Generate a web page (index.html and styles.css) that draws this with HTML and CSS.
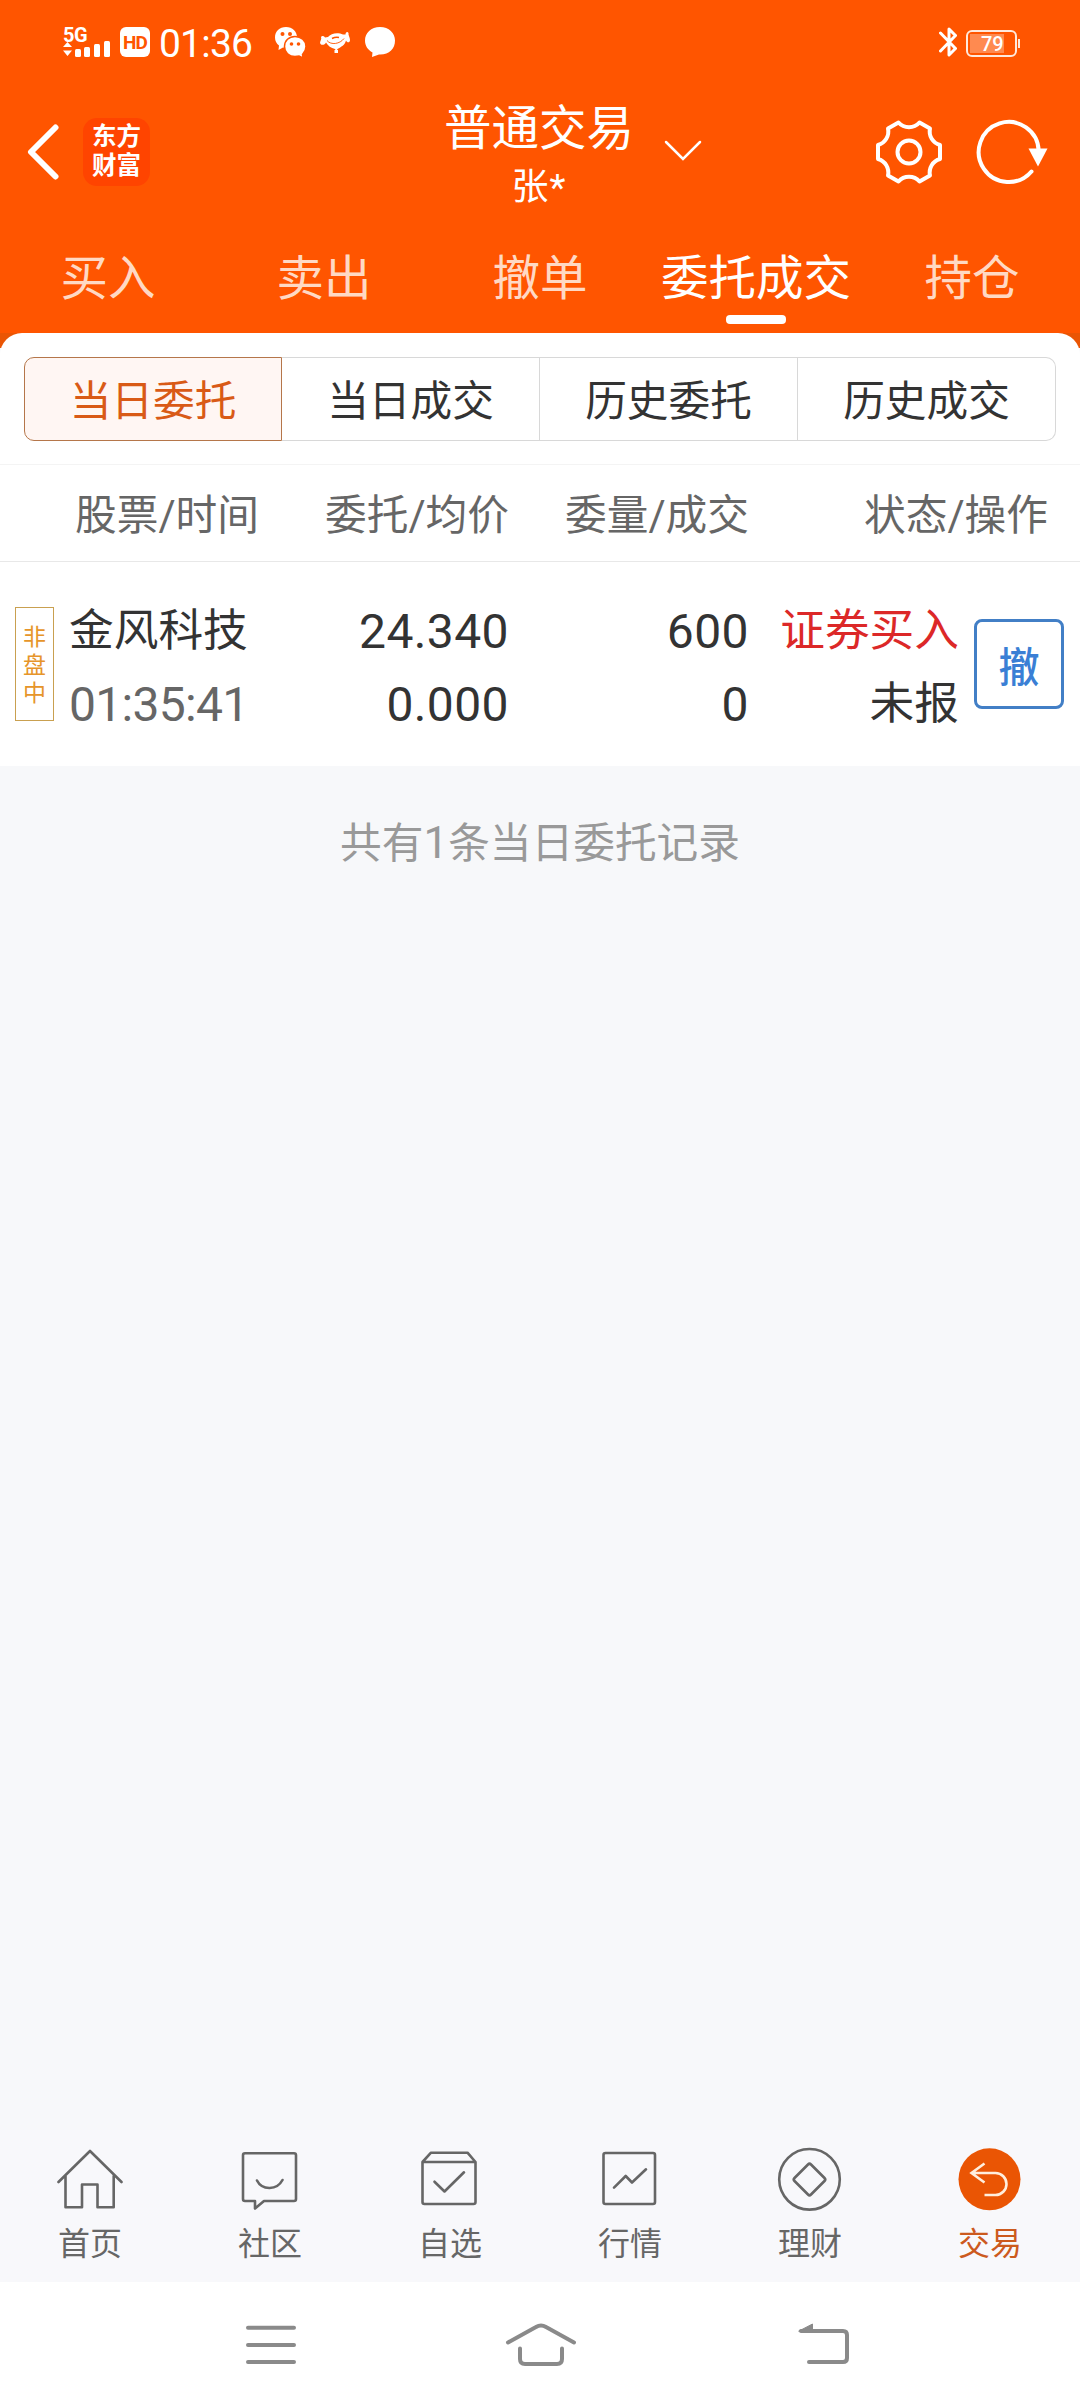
FILE: index.html
```html
<!DOCTYPE html>
<html lang="zh-CN">
<head>
    <meta charset="UTF-8">
    <meta name="viewport" content="width=device-width, initial-scale=1.0">
    <title>普通交易</title>
    <link rel="stylesheet" href="styles.css">
</head>
<body>
    <header class="header">
        <!-- Status bar -->
        <div class="status-bar">
            <div class="status-left">
                <div class="signal">
                    <span class="signal-text">5G</span>
                    <svg width="50" height="17" viewBox="0 0 50 17" fill="#fff">
                        <path d="M0 7L4.500 2L9 7ZM0 10.500L4.500 16L9 10.500Z"/>
                        <rect x="12" y="9" width="6" height="8" rx="1.500"/>
                        <rect x="21" y="7" width="6" height="10" rx="1.500"/>
                        <rect x="31" y="4" width="6" height="13" rx="1.500"/>
                        <rect x="41" y="1" width="6" height="16" rx="1.500"/>
                    </svg>
                </div>
                <span class="hd">HD</span>
                <span class="clock">01:36</span>
                <svg class="icon-wechat" width="32" height="32" viewBox="0 0 32 32">
                    <path fill="#fff" d="M12 1C5.400 1 1 5.500 1 11.500C1 15 2.500 17.500 5 19.500L4.500 24L9 21.500L12.500 22C17 22 23 18 23 11.500C23 5.500 18.500 1 12 1Z"/>
                    <path fill="#fff" stroke="#ff5500" stroke-width="1.500" d="M21 10.500C15 10.500 10.500 14.500 10.500 20.500C10.500 26.500 15 30.500 21 30.500L25 30L29 32L28.500 28.500C30.500 26.500 32 24 32 20.500C32 14.500 27 10.500 21 10.500Z"/>
                    <g fill="#ff5500">
                        <circle cx="8.500" cy="8" r="2"/><circle cx="16" cy="8" r="2"/>
                        <circle cx="17.500" cy="18" r="1.800"/><circle cx="24.500" cy="18" r="1.800"/>
                    </g>
                </svg>
                <svg class="icon-dog" width="30" height="23" viewBox="0 0 30 23">
                    <path fill="#fff" d="M1 6C2 4.500 4 5 5 6.500L8 6C11 2 18 1 23 3.500L25.500 3.500C25.500 1 27.500 0 28.500 2C28 4 30 6 30 9C30 12 27 12 26 9.500C25 14 21 16 17.500 18L17 19H18V22H14.500V19H15.500L15 18C11 17 8 15 6 11.500C5 14 1 15 0 12C0 10 2 8 1 6Z"/>
                    <path fill="none" stroke="#ff5500" stroke-width="0.900" d="M7 9.500C11 14.500 20 13 24 7.500"/>
                    <path fill="none" stroke="#ff5500" stroke-width="1.500" d="M12 7.500C14 6.500 17 6 19 6.500"/>
                </svg>
                <svg class="icon-bubble" width="30" height="30" viewBox="0 0 30 30">
                    <path fill="#fff" d="M15 0C6 0 0 6 0 13.500C0 19 3 23 7.500 25.500L7 30L14 27.500C24 28 30 22 30 13.500C30 6 24 0 15 0Z"/>
                </svg>
            </div>
            <div class="status-right">
                <svg width="18" height="30" viewBox="0 0 18 30" fill="none" stroke="#fff" stroke-width="3" stroke-linejoin="round" stroke-linecap="round">
                    <path d="M1.500 6L16.500 21.500L10 28V2L16.500 8.500L1.500 24"/>
                </svg>
                <div class="battery"><span class="battery-level"></span><span class="battery-text">79</span></div>
            </div>
        </div>

        <!-- Title bar -->
        <div class="title-bar">
            <div class="title-left">
                <svg width="32" height="56" viewBox="0 0 32 56" fill="none" stroke="#fff" stroke-width="6" stroke-linecap="round" stroke-linejoin="round">
                    <path d="M28.500 3.500L4 28L28.500 52.500"/>
                </svg>
                <div class="logo">东方<br>财富</div>
            </div>
            <div class="title-center">
                <div class="title-text">
                    <h1>普通交易</h1>
                    <p>张*</p>
                </div>
                <svg class="chevron" width="38" height="21" viewBox="0 0 38 21" fill="none" stroke="#fff" stroke-width="2.500" stroke-linecap="round">
                    <path d="M2 2L19 19L36 2"/>
                </svg>
            </div>
            <div class="title-right">
                <svg width="66" height="66" viewBox="0 0 66 66" fill="none" stroke="#fff" stroke-width="4" stroke-linejoin="round">
                    <path d="M22.500 3.500A14 14 0 0 0 43.500 3.500L54 9.500A14 14 0 0 0 64 26V40A14 14 0 0 0 54 56.500L43.500 62.500A14 14 0 0 0 22.500 62.500L12 56.500A14 14 0 0 0 2 40V26A14 14 0 0 0 12 9.500Z"/>
                    <circle cx="33" cy="33" r="11.500"/>
                </svg>
                <svg width="74" height="66" viewBox="0 0 74 66">
                    <path fill="none" stroke="#fff" stroke-width="4" stroke-linecap="round" d="M55.500 52.500A30 30 0 1 1 62.700 32"/>
                    <path fill="#fff" d="M52.500 29.500H71.500L62 47.500Z"/>
                </svg>
            </div>
        </div>

        <!-- Main tabs -->
        <nav class="tabs">
            <a class="tab">买入</a>
            <a class="tab">卖出</a>
            <a class="tab">撤单</a>
            <a class="tab active">委托成交</a>
            <a class="tab">持仓</a>
        </nav>
    </header>

    <main class="panel-wrap">
        <div class="panel">
            <div class="segments">
                <div class="segment active">当日委托</div>
                <div class="segment">当日成交</div>
                <div class="segment">历史委托</div>
                <div class="segment">历史成交</div>
            </div>

            <div class="table-head">
                <span>股票/时间</span>
                <span>委托/均价</span>
                <span>委量/成交</span>
                <span>状态/操作</span>
            </div>

            <!-- Order row -->
            <div class="order">
                <div class="badge">非盘中</div>
                <div class="cell name"><span>金风科技</span><span class="num time">01:35:41</span></div>
                <div class="cell price"><span class="num">24.340</span><span class="num">0.000</span></div>
                <div class="cell amount"><span class="num">600</span><span class="num">0</span></div>
                <div class="cell state"><span class="buy">证券买入</span><span>未报</span></div>
                <button class="cancel">撤</button>
            </div>
        </div>
        <p class="summary">共有<span class="one">1</span>条当日委托记录</p>
    </main>

    <!-- Bottom tab bar -->
    <footer class="bottom-bar">
        <div class="bottom-item">
            <svg class="bottom-icon" viewBox="0 0 66 66">
                <path d="M1.500 36L33 5L64.500 36M8.500 30V61.300H25V38.500H40.500V61.300H56.700V30"/>
            </svg>
            <span>首页</span>
        </div>
        <div class="bottom-item">
            <svg class="bottom-icon" viewBox="0 0 66 66">
                <path d="M8 7.300H57Q59 7.300 59 9.300V53Q59 55 57 55H27L18 62.500V55H8Q6 55 6 53V9.300Q6 7.300 8 7.300ZM20 34.500C25 44.500 40 44.500 45.500 34"/>
            </svg>
            <span>社区</span>
        </div>
        <div class="bottom-item">
            <svg class="bottom-icon" viewBox="0 0 66 66">
                <path d="M5.500 16L14 6.700H50.500L58.500 16V56Q58.500 58 56.500 58H7.500Q5.500 58 5.500 56ZM5.500 16H58.500M17.500 35.700L27.500 45.500L47 26.300"/>
            </svg>
            <span>自选</span>
        </div>
        <div class="bottom-item">
            <svg class="bottom-icon" viewBox="0 0 66 66">
                <rect x="6.500" y="7" width="51.500" height="51" rx="2"/>
                <path d="M17 41.700L28.700 30L35 36.500L49 23.300"/>
            </svg>
            <span>行情</span>
        </div>
        <div class="bottom-item">
            <svg class="bottom-icon" viewBox="0 0 66 66">
                <circle cx="32.500" cy="33.300" r="30.300"/>
                <path d="M31 18.500Q32.500 17 34 18.500L47.500 32Q49 33.500 47.500 35L34 48.500Q32.500 50 31 48.500L17.500 35Q16 33.500 17.500 32Z"/>
            </svg>
            <span>理财</span>
        </div>
        <div class="bottom-item active">
            <svg class="bottom-icon" viewBox="0 0 66 66">
                <circle class="disc" cx="32.500" cy="33.300" r="31"/>
                <path class="arrow" d="M27.500 17.500L14.500 27L27.500 36.500M14.500 27H38.500A11 11 0 0 1 38.500 49H27.500"/>
            </svg>
            <span>交易</span>
        </div>
    </footer>

    <!-- System navigation -->
    <div class="system-nav">
        <svg width="52" height="44" viewBox="0 0 52 44"><path d="M3 4.700H49M3 22H49M3 39H49"/></svg>
        <svg class="nav-home" width="72" height="44" viewBox="0 0 72 44"><path d="M3 19.500L31 4Q36 1 41 4L69 19.500M15 25.500V36Q15 41 20 41H52Q57 41 57 36V25.500"/></svg>
        <svg width="54" height="44" viewBox="0 0 54 44"><path d="M4 8H46Q50 8 50 12V35Q50 39 46 39H12"/><path class="solid" d="M2 8L15.500 1V8Z"/></svg>
    </div>
</body>
</html>
```
FILE: styles.css
```css
* {
    box-sizing: border-box;
}

body {
    margin: 0;
    width: 1080px;
    height: 2408px;
    display: flex;
    flex-direction: column;
    background: #f7f8fa;
    font-family: Roboto, "Noto Sans CJK SC", sans-serif;
    color: #333;
    overflow: hidden;
}

h1, p {
    margin: 0;
    font-weight: 400;
}

svg {
    display: block;
    flex-shrink: 0;
}

/* Orange header */
.header {
    height: 333px;
    background: #ff5500;
    color: #fff;
}

.status-bar {
    height: 88px;
    display: flex;
    justify-content: space-between;
    padding: 25px 63px 0 63px;
}

.status-left,
.status-right {
    display: flex;
    align-items: flex-start;
}

.signal {
    width: 50px;
}

.signal-text {
    display: block;
    height: 15px;
    font-size: 20px;
    font-weight: 700;
    line-height: 20px;
    letter-spacing: -0.5px;
}

.hd {
    width: 30px;
    height: 30px;
    margin: 2px 0 0 7px;
    border-radius: 6px;
    background: #fff;
    color: #ff5500;
    font-size: 19px;
    font-weight: 700;
    line-height: 31px;
    letter-spacing: -1px;
    text-align: center;
}

.clock {
    width: 96px;
    margin-left: 9px;
    margin-right: 1px;
    font-size: 39px;
    line-height: 39px;
    letter-spacing: -0.8px;
}

.icon-wechat {
    margin: 1px 0 0 18px;
}

.icon-dog {
    margin: 6px 0 0 14px;
}

.icon-bubble {
    margin: 2px 0 0 15px;
}

.status-right {
    gap: 9px;
    padding-top: 2px;
}

.battery {
    position: relative;
    width: 51px;
    height: 27px;
    margin-top: 3px;
    border: 2px solid #ffe9dc;
    border-radius: 6px;
}

/* Battery nub */
.battery::after {
    content: "";
    position: absolute;
    right: -5px;
    top: 7px;
    width: 2px;
    height: 9px;
    background: #ffe9dc;
}

.battery-level {
    position: absolute;
    left: 2px;
    top: 2px;
    width: 34px;
    height: 19px;
    background: #ff8a50;
}

.battery-text {
    position: absolute;
    left: 13px;
    top: 1px;
    font-size: 20px;
    font-weight: 500;
    line-height: 22px;
}

.title-bar {
    height: 127px;
    display: grid;
    grid-template-columns: 420px 1fr 204px;
}

.title-left {
    display: flex;
    align-items: center;
    gap: 24px;
    padding-left: 27px;
}

.logo {
    width: 67px;
    height: 68px;
    padding-top: 4px;
    border-radius: 14px;
    background: #ff4400;
    font-size: 24.5px;
    font-weight: 700;
    line-height: 29px;
    text-align: center;
}

.title-center {
    display: flex;
    align-items: flex-start;
    padding-left: 23px;
}

.title-text {
    width: 192px;
    text-align: center;
    white-space: nowrap;
}

.title-text h1 {
    margin-top: 11px;
    font-size: 47.5px;
    line-height: 60px;
}

.title-text p {
    margin-top: 4px;
    font-size: 37px;
    line-height: 50px;
    letter-spacing: 1px;
}

.chevron {
    margin: 52px 0 0 29px;
}

.title-right {
    display: flex;
    align-items: center;
    gap: 34px;
}

.tabs {
    height: 118px;
    display: flex;
}

.tab {
    width: 216px;
    display: flex;
    flex-direction: column;
    align-items: center;
    padding-top: 34px;
    font-size: 47.5px;
    line-height: 60px;
    color: #ffd9c4;
}

.tab.active {
    color: #fff;
}

.tab.active::after {
    content: "";
    width: 60px;
    height: 9px;
    margin-top: 6px;
    border-radius: 4px;
    background: #fff;
}

/* White panel over the darker corner strip */
.panel-wrap {
    flex: 1;
    background: linear-gradient(#ea5504 15px, #f7f8fa 15px);
}

.panel {
    border-radius: 22px 22px 0 0;
    background: #fff;
}

.segments {
    height: 132px;
    display: flex;
    padding: 24px 24px 0;
    border-bottom: 1px solid #f4f4f4;
}

.segment {
    width: 258px;
    height: 84px;
    border: 1px solid #d8d8d8;
    border-left-width: 0;
    font-size: 41.7px;
    line-height: 87px;
    text-align: center;
}

.segment.active {
    border: 1px solid #b5764a;
    border-radius: 10px 0 0 10px;
    background: #fff6f3;
    color: #d95a16;
}

.segment:last-child {
    border-radius: 0 10px 10px 0;
}

.table-head {
    height: 97px;
    display: grid;
    grid-template-columns: 259px 250px 240px 299px;
    border-bottom: 1px solid #e8e8e8;
    font-size: 41.7px;
    line-height: 102px;
    color: #666;
    text-align: right;
}

.order {
    height: 204px;
    display: flex;
    align-items: flex-start;
    padding-left: 15px;
}

.badge {
    width: 39px;
    height: 114px;
    margin-top: 45px;
    padding: 16px 7px 0;
    border: 1px solid #c9a050;
    font-size: 23px;
    line-height: 28px;
    word-break: break-all;
    color: #e6952a;
}

.cell {
    display: flex;
    flex-direction: column;
    padding-top: 33px;
    font-size: 44.7px;
    line-height: 73px;
    text-align: right;
}

.num {
    font-size: 48px;
    letter-spacing: 0.4px;
}

.name {
    width: 196px;
    padding-left: 15px;
    text-align: left;
}

.time {
    color: #666;
    letter-spacing: -0.7px;
}

.price {
    width: 259px;
}

.amount {
    width: 240px;
}

.state {
    width: 210px;
}

.buy {
    color: #dc2828;
}

.cancel {
    width: 90px;
    height: 90px;
    margin: 57px 0 0 15px;
    padding: 0;
    border: 3px solid #427fc6;
    border-radius: 8px;
    background: #fff;
    color: #3a7fd5;
    font: 500 41px "Noto Sans CJK SC", sans-serif;
    line-height: 80px;
}

.summary {
    padding-top: 47px;
    font-size: 41.7px;
    line-height: 62px;
    color: #999;
    text-align: center;
}

.one {
    font-size: 44px;
    line-height: 1;
}

/* Bottom tab bar */
.bottom-bar {
    height: 152px;
    display: flex;
    background: #f8f8fb;
}

.bottom-item {
    width: 180px;
    display: flex;
    flex-direction: column;
    align-items: center;
    padding-top: 16px;
    font-size: 32px;
    line-height: 40px;
    color: #666;
}

.bottom-item span {
    margin-top: 12px;
}

.bottom-item.active {
    color: #cc5a1e;
}

.bottom-icon {
    width: 66px;
    height: 66px;
    fill: none;
    stroke: #666;
    stroke-width: 2.6;
    stroke-linejoin: round;
    stroke-linecap: round;
}

.disc {
    fill: #ea5504;
    stroke: none;
}

.arrow {
    stroke: #ffeedd;
    stroke-linecap: butt;
    stroke-linejoin: miter;
}

/* System navigation */
.system-nav {
    height: 126px;
    display: flex;
    padding: 41px 0 0 245px;
    background: #fff;
    fill: none;
    stroke: #8a8a8a;
    stroke-width: 4;
    stroke-linecap: round;
    stroke-linejoin: round;
}

.nav-home {
    margin: 0 220px 0 208px;
}

.solid {
    fill: #8a8a8a;
    stroke-width: 1;
}
```
